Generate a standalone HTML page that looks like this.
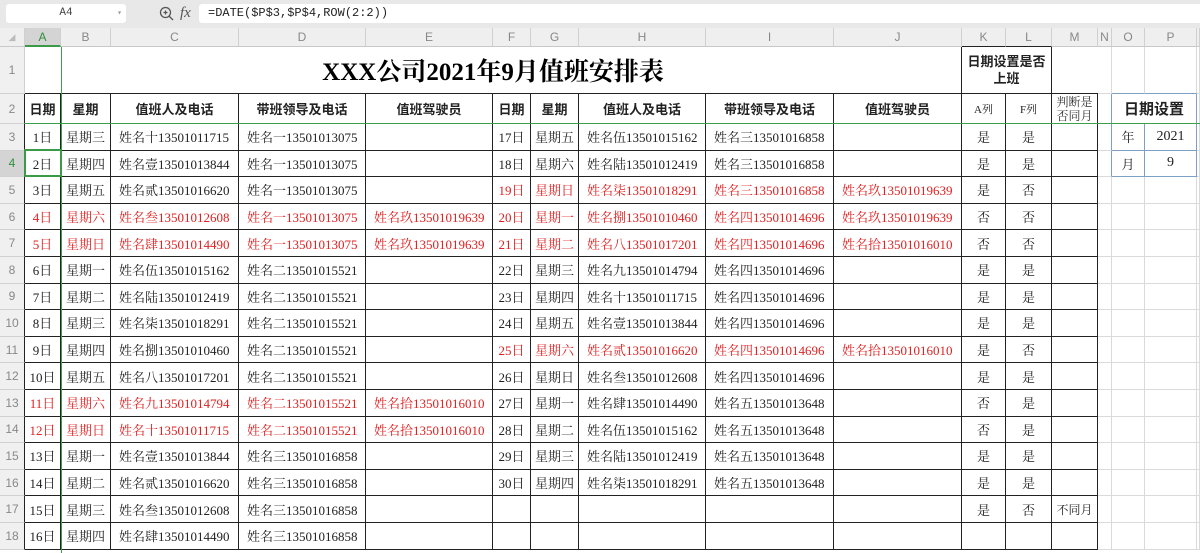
<!DOCTYPE html>
<html><head><meta charset="utf-8">
<style>
*{box-sizing:border-box;margin:0;padding:0}
body{width:1200px;height:553px;overflow:hidden;background:#fff;font-family:"Liberation Serif","Noto Serif CJK SC",serif;position:relative}
.bar{position:absolute;left:0;top:0;width:1200px;height:28px;background:#e8e8e8}
.nb{position:absolute;left:6px;top:4px;width:120px;height:19px;background:#fff;border-radius:3px;font:11px "Liberation Mono",monospace;color:#444;text-align:center;line-height:19px}
.nb span{position:absolute;right:4px;color:#999;font-size:8px}
.fx{position:absolute;left:160px;top:5px;font:italic 15px "Liberation Serif",serif;color:#555}
.fb{position:absolute;left:199px;top:4px;width:1001px;height:19px;background:#fff;border-radius:3px 0 0 3px;font:12px "Liberation Mono",monospace;color:#222;line-height:19px;padding-left:9px}
table{position:absolute;left:0;top:28px;border-collapse:separate;border-spacing:0;table-layout:fixed;width:1200px}
td{border-right:1px solid #dadada;border-bottom:1px solid #dadada;font-size:13px;color:#222;text-align:center;white-space:nowrap;overflow:hidden;height:26.6px;padding:0}
tr.ch td{background:#efefef;color:#888;font-family:"Liberation Sans",sans-serif;font-size:12px;height:19px;border-right:1px solid #d0d0d0;border-bottom:1px solid #c8c8c8}
td.rh{background:#f0f0f0;color:#888;font-family:"Liberation Sans",sans-serif;font-size:12px;border-right:1px solid #222;border-bottom:1px solid #d0d0d0}
td.d{border-right:1px solid #222;border-bottom:1px solid #222}
td.l{text-align:left;padding-left:8px}
td.h{font-family:"Liberation Sans","Noto Sans CJK SC",sans-serif;font-weight:bold;font-size:13px}
.red{color:#e02020}
td.b{border-right:1px solid #7d9fc4;border-bottom:1px solid #7d9fc4}
td.bb{border-bottom:1px solid #7d9fc4}
td.br{border-right:1px solid #7d9fc4}
.vg{position:absolute;left:61px;top:47px;width:1px;height:506px;background:#3aa14a}
.hg{position:absolute;left:25px;top:123px;width:1175px;height:1px;background:#3aa14a}
.sel{position:absolute;left:24px;top:149px;width:38px;height:28px;border:2px solid #3a9a45}
</style></head><body>
<div class="bar"><div class="nb">A4<span>▾</span></div>
<svg style="position:absolute;left:159px;top:6px" width="16" height="16" viewBox="0 0 16 16"><circle cx="6.5" cy="6.5" r="5" fill="none" stroke="#555" stroke-width="1.3"/><path d="M10 10l4 4M4.5 6.5h4M6.5 4.5v4" stroke="#555" stroke-width="1.3"/></svg>
<div class="fx" style="left:180px">fx</div>
<div class="fb">=DATE($P$3,$P$4,ROW(2:2))</div></div>
<table>
<colgroup><col style="width:25px"><col style="width:36px"><col style="width:50px"><col style="width:128px"><col style="width:127px"><col style="width:127px"><col style="width:38px"><col style="width:48px"><col style="width:127px"><col style="width:128px"><col style="width:128px"><col style="width:44px"><col style="width:46px"><col style="width:46px"><col style="width:14px"><col style="width:33px"><col style="width:52px"><col style="width:3px"></colgroup>
<tr class="ch"><td style="color:#bbb;font-size:9px">◢</td><td style="background:#d4d4d4;color:#2f8f3d;border-bottom:2px solid #3a9a45">A</td><td>B</td><td>C</td><td>D</td><td>E</td><td>F</td><td>G</td><td>H</td><td>I</td><td>J</td><td style="border-bottom-color:#222">K</td><td style="border-bottom-color:#222">L</td><td>M</td><td>N</td><td>O</td><td>P</td><td></td></tr>
<tr style="height:47px"><td class="rh" style="height:47px;border-right-color:#d0d0d0">1</td><td colspan="10" class="d" style="height:47px;font-weight:bold;font-size:25px;font-family:'Liberation Serif','Noto Serif CJK SC',serif;color:#000;padding-left:0">XXX公司2021年9月值班安排表</td><td colspan="2" class="d h" style="white-space:normal;line-height:17px;font-size:13px;padding:0 4px">日期设置是否上班</td><td class="d" style="border-right:none"></td><td></td><td class="bb"></td><td class="bb"></td><td></td></tr>
<tr style="height:30px"><td class="rh" style="height:30px">2</td><td class="d h">日期</td><td class="d h">星期</td><td class="d h">值班人及电话</td><td class="d h">带班领导及电话</td><td class="d h">值班驾驶员</td><td class="d h">日期</td><td class="d h">星期</td><td class="d h">值班人及电话</td><td class="d h">带班领导及电话</td><td class="d h">值班驾驶员</td><td class="d" style="font-size:11px">A列</td><td class="d" style="font-size:11px">F列</td><td class="d" style="font-size:12px;line-height:14px;color:#333">判断是<br>否同月</td><td class="br"></td><td colspan="2" class="b h" style="font-size:15px">日期设置</td><td></td></tr>
<tr><td class="rh">3</td><td class="d">1日</td><td class="d">星期三</td><td class="d l">姓名十13501011715</td><td class="d l">姓名一13501013075</td><td class="d"></td><td class="d">17日</td><td class="d">星期五</td><td class="d l">姓名伍13501015162</td><td class="d l">姓名三13501016858</td><td class="d"></td><td class="d">是</td><td class="d">是</td><td class="d"></td><td class="br"></td><td class="b">年</td><td class="b" style="font-size:14px">2021</td><td></td></tr>
<tr><td class="rh" style="background:#d4d4d4;color:#2f8f3d">4</td><td class="d">2日</td><td class="d">星期四</td><td class="d l">姓名壹13501013844</td><td class="d l">姓名一13501013075</td><td class="d"></td><td class="d">18日</td><td class="d">星期六</td><td class="d l">姓名陆13501012419</td><td class="d l">姓名三13501016858</td><td class="d"></td><td class="d">是</td><td class="d">是</td><td class="d"></td><td class="br"></td><td class="b">月</td><td class="b" style="font-size:14px">9</td><td></td></tr>
<tr><td class="rh">5</td><td class="d">3日</td><td class="d">星期五</td><td class="d l">姓名贰13501016620</td><td class="d l">姓名一13501013075</td><td class="d"></td><td class="d red">19日</td><td class="d red">星期日</td><td class="d l red">姓名柒13501018291</td><td class="d l red">姓名三13501016858</td><td class="d l red">姓名玖13501019639</td><td class="d">是</td><td class="d">否</td><td class="d"></td><td></td><td></td><td></td><td></td></tr>
<tr><td class="rh">6</td><td class="d red">4日</td><td class="d red">星期六</td><td class="d l red">姓名叁13501012608</td><td class="d l red">姓名一13501013075</td><td class="d l red">姓名玖13501019639</td><td class="d red">20日</td><td class="d red">星期一</td><td class="d l red">姓名捌13501010460</td><td class="d l red">姓名四13501014696</td><td class="d l red">姓名玖13501019639</td><td class="d">否</td><td class="d">否</td><td class="d"></td><td></td><td></td><td></td><td></td></tr>
<tr><td class="rh">7</td><td class="d red">5日</td><td class="d red">星期日</td><td class="d l red">姓名肆13501014490</td><td class="d l red">姓名一13501013075</td><td class="d l red">姓名玖13501019639</td><td class="d red">21日</td><td class="d red">星期二</td><td class="d l red">姓名八13501017201</td><td class="d l red">姓名四13501014696</td><td class="d l red">姓名拾13501016010</td><td class="d">否</td><td class="d">否</td><td class="d"></td><td></td><td></td><td></td><td></td></tr>
<tr><td class="rh">8</td><td class="d">6日</td><td class="d">星期一</td><td class="d l">姓名伍13501015162</td><td class="d l">姓名二13501015521</td><td class="d"></td><td class="d">22日</td><td class="d">星期三</td><td class="d l">姓名九13501014794</td><td class="d l">姓名四13501014696</td><td class="d"></td><td class="d">是</td><td class="d">是</td><td class="d"></td><td></td><td></td><td></td><td></td></tr>
<tr><td class="rh">9</td><td class="d">7日</td><td class="d">星期二</td><td class="d l">姓名陆13501012419</td><td class="d l">姓名二13501015521</td><td class="d"></td><td class="d">23日</td><td class="d">星期四</td><td class="d l">姓名十13501011715</td><td class="d l">姓名四13501014696</td><td class="d"></td><td class="d">是</td><td class="d">是</td><td class="d"></td><td></td><td></td><td></td><td></td></tr>
<tr><td class="rh">10</td><td class="d">8日</td><td class="d">星期三</td><td class="d l">姓名柒13501018291</td><td class="d l">姓名二13501015521</td><td class="d"></td><td class="d">24日</td><td class="d">星期五</td><td class="d l">姓名壹13501013844</td><td class="d l">姓名四13501014696</td><td class="d"></td><td class="d">是</td><td class="d">是</td><td class="d"></td><td></td><td></td><td></td><td></td></tr>
<tr><td class="rh">11</td><td class="d">9日</td><td class="d">星期四</td><td class="d l">姓名捌13501010460</td><td class="d l">姓名二13501015521</td><td class="d"></td><td class="d red">25日</td><td class="d red">星期六</td><td class="d l red">姓名贰13501016620</td><td class="d l red">姓名四13501014696</td><td class="d l red">姓名拾13501016010</td><td class="d">是</td><td class="d">否</td><td class="d"></td><td></td><td></td><td></td><td></td></tr>
<tr><td class="rh">12</td><td class="d">10日</td><td class="d">星期五</td><td class="d l">姓名八13501017201</td><td class="d l">姓名二13501015521</td><td class="d"></td><td class="d">26日</td><td class="d">星期日</td><td class="d l">姓名叁13501012608</td><td class="d l">姓名四13501014696</td><td class="d"></td><td class="d">是</td><td class="d">是</td><td class="d"></td><td></td><td></td><td></td><td></td></tr>
<tr><td class="rh">13</td><td class="d red">11日</td><td class="d red">星期六</td><td class="d l red">姓名九13501014794</td><td class="d l red">姓名二13501015521</td><td class="d l red">姓名拾13501016010</td><td class="d">27日</td><td class="d">星期一</td><td class="d l">姓名肆13501014490</td><td class="d l">姓名五13501013648</td><td class="d"></td><td class="d">否</td><td class="d">是</td><td class="d"></td><td></td><td></td><td></td><td></td></tr>
<tr><td class="rh">14</td><td class="d red">12日</td><td class="d red">星期日</td><td class="d l red">姓名十13501011715</td><td class="d l red">姓名二13501015521</td><td class="d l red">姓名拾13501016010</td><td class="d">28日</td><td class="d">星期二</td><td class="d l">姓名伍13501015162</td><td class="d l">姓名五13501013648</td><td class="d"></td><td class="d">否</td><td class="d">是</td><td class="d"></td><td></td><td></td><td></td><td></td></tr>
<tr><td class="rh">15</td><td class="d">13日</td><td class="d">星期一</td><td class="d l">姓名壹13501013844</td><td class="d l">姓名三13501016858</td><td class="d"></td><td class="d">29日</td><td class="d">星期三</td><td class="d l">姓名陆13501012419</td><td class="d l">姓名五13501013648</td><td class="d"></td><td class="d">是</td><td class="d">是</td><td class="d"></td><td></td><td></td><td></td><td></td></tr>
<tr><td class="rh">16</td><td class="d">14日</td><td class="d">星期二</td><td class="d l">姓名贰13501016620</td><td class="d l">姓名三13501016858</td><td class="d"></td><td class="d">30日</td><td class="d">星期四</td><td class="d l">姓名柒13501018291</td><td class="d l">姓名五13501013648</td><td class="d"></td><td class="d">是</td><td class="d">是</td><td class="d"></td><td></td><td></td><td></td><td></td></tr>
<tr><td class="rh">17</td><td class="d">15日</td><td class="d">星期三</td><td class="d l">姓名叁13501012608</td><td class="d l">姓名三13501016858</td><td class="d"></td><td class="d"></td><td class="d"></td><td class="d"></td><td class="d"></td><td class="d"></td><td class="d">是</td><td class="d">否</td><td class="d" style="font-size:12px">不同月</td><td></td><td></td><td></td><td></td></tr>
<tr><td class="rh">18</td><td class="d">16日</td><td class="d">星期四</td><td class="d l">姓名肆13501014490</td><td class="d l">姓名三13501016858</td><td class="d"></td><td class="d"></td><td class="d"></td><td class="d"></td><td class="d"></td><td class="d"></td><td class="d"></td><td class="d"></td><td class="d"></td><td></td><td></td><td></td><td></td></tr>
</table>
<div class="vg"></div><div class="hg"></div><div class="sel"></div>
</body></html>
